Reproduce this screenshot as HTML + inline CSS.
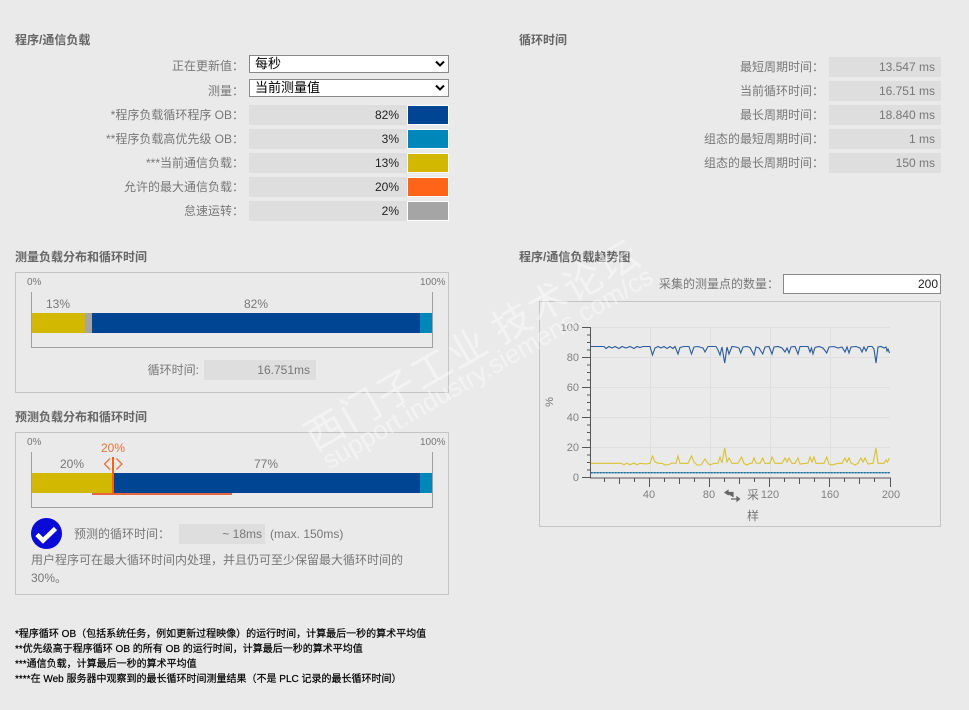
<!DOCTYPE html>
<html lang="zh"><head><meta charset="utf-8"><title>程序/通信负载</title>
<style>
html,body{margin:0;padding:0;background:#eaeaea}
body{width:969px;height:710px;position:relative;overflow:hidden;font-family:"Liberation Sans","Noto Sans CJK SC",sans-serif;font-size:12px;color:#777}
.a{position:absolute;white-space:nowrap}
.h{position:absolute;white-space:nowrap;font-weight:bold;font-size:12px;color:#666;line-height:16px}
.l{position:absolute;white-space:nowrap;text-align:right;line-height:20px;height:20px;color:#777}
.v{position:absolute;background:#dedede;text-align:right;line-height:20px;height:20px;box-sizing:border-box;padding-right:6px;color:#777}
.sel{position:absolute;left:249px;width:200px;height:18px;box-sizing:border-box;background:#fff;border:1px solid #888;color:#000;font-size:13px;line-height:16px;padding-left:5px}
.sw{position:absolute;left:407px;width:42px;height:20px;box-sizing:border-box;border:1px solid #fff}
.box{position:absolute;box-sizing:border-box;border:1px solid #c4c4c4}
.f{position:absolute;left:15px;white-space:nowrap;color:#000;font-size:10px;line-height:15px;-webkit-text-stroke:.2px #000}
.b{position:absolute}
</style></head><body>

<div class="h" style="left:15px;top:32px">程序/通信负载</div>
<div class="l" style="right:725px;top:56px">正在更新值：</div>
<div class="sel" style="top:55px">每秒</div>
<svg class="a" style="left:434px;top:60px" width="12" height="8"><path d="M2 1.5 L6 5.5 L10 1.5" fill="none" stroke="#000" stroke-width="2"/></svg>
<div class="l" style="right:725px;top:81px">测量：</div>
<div class="sel" style="top:79px">当前测量值</div>
<svg class="a" style="left:434px;top:84px" width="12" height="8"><path d="M2 1.5 L6 5.5 L10 1.5" fill="none" stroke="#000" stroke-width="2"/></svg>

<div class="l" style="right:725px;top:105px">*程序负载循环程序 OB：</div>
<div class="v" style="left:249px;top:105px;width:158px;color:#222;padding-right:8px">82%</div><div class="sw" style="top:105px;background:#004494"></div>
<div class="l" style="right:725px;top:129px">**程序负载高优先级 OB：</div>
<div class="v" style="left:249px;top:129px;width:158px;color:#222;padding-right:8px">3%</div><div class="sw" style="top:129px;background:#0087b9"></div>
<div class="l" style="right:725px;top:153px">***当前通信负载：</div>
<div class="v" style="left:249px;top:153px;width:158px;color:#222;padding-right:8px">13%</div><div class="sw" style="top:153px;background:#d2b900"></div>
<div class="l" style="right:725px;top:177px">允许的最大通信负载：</div>
<div class="v" style="left:249px;top:177px;width:158px;color:#222;padding-right:8px">20%</div><div class="sw" style="top:177px;background:#ff6419"></div>
<div class="l" style="right:725px;top:201px">怠速运转：</div>
<div class="v" style="left:249px;top:201px;width:158px;color:#222;padding-right:8px">2%</div><div class="sw" style="top:201px;background:#a5a5a5"></div>

<div class="h" style="left:519px;top:32px">循环时间</div>
<div class="l" style="right:145px;top:57px">最短周期时间：</div><div class="v" style="left:829px;top:57px;width:112px">13.547 ms</div>
<div class="l" style="right:145px;top:81px">当前循环时间：</div><div class="v" style="left:829px;top:81px;width:112px">16.751 ms</div>
<div class="l" style="right:145px;top:105px">最长周期时间：</div><div class="v" style="left:829px;top:105px;width:112px">18.840 ms</div>
<div class="l" style="right:145px;top:129px">组态的最短周期时间：</div><div class="v" style="left:829px;top:129px;width:112px">1 ms</div>
<div class="l" style="right:145px;top:153px">组态的最长周期时间：</div><div class="v" style="left:829px;top:153px;width:112px">150 ms</div>

<div class="h" style="left:15px;top:249px">测量负载分布和循环时间</div>
<div class="box" style="left:15px;top:272px;width:434px;height:121px"></div>
<div class="a" style="left:27px;top:277px;font-size:10px;line-height:12px">0%</div>
<div class="a" style="left:420px;top:277px;font-size:10px;line-height:12px">100%</div>
<div class="b" style="left:31px;top:292px;width:400px;height:55px;border:1px solid #a0a0a0;border-top:0"></div>
<div class="a" style="left:46px;top:296px;line-height:16px">13%</div>
<div class="a" style="left:244px;top:296px;line-height:16px">82%</div>
<div class="b" style="left:32px;top:313px;width:52.5px;height:20px;background:#d2b900"></div>
<div class="b" style="left:84.5px;top:313px;width:7.5px;height:20px;background:#a5a5a5"></div>
<div class="b" style="left:92px;top:313px;width:328px;height:20px;background:#004494"></div>
<div class="b" style="left:420px;top:313px;width:12px;height:20px;background:#0087b9"></div>
<div class="l" style="right:770px;top:360px">循环时间:</div>
<div class="v" style="left:204px;top:360px;width:112px">16.751ms</div>

<div class="h" style="left:15px;top:409px">预测负载分布和循环时间</div>
<div class="box" style="left:15px;top:432px;width:434px;height:163px"></div>
<div class="a" style="left:27px;top:437px;font-size:10px;line-height:12px">0%</div>
<div class="a" style="left:420px;top:437px;font-size:10px;line-height:12px">100%</div>
<div class="b" style="left:31px;top:452px;width:400px;height:55px;border:1px solid #a0a0a0;border-top:0"></div>
<div class="a" style="left:60px;top:456px;line-height:16px">20%</div>
<div class="a" style="left:254px;top:456px;line-height:16px">77%</div>
<div class="a" style="left:101px;top:440px;line-height:16px;color:#e8703a">20%</div>
<div class="b" style="left:32px;top:473px;width:81px;height:20px;background:#d2b900"></div>
<div class="b" style="left:113px;top:473px;width:307px;height:20px;background:#004494"></div>
<div class="b" style="left:420px;top:473px;width:12px;height:20px;background:#0087b9"></div>
<div class="b" style="left:92px;top:493px;width:140px;height:2px;background:#e8643c"></div>
<div class="b" style="left:112px;top:457px;width:2px;height:37px;background:#f0641e"></div>
<svg class="a" style="left:101px;top:456px" width="24" height="16"><path d="M9 2.5 L3.5 8 L9 13.5 M15.5 2.5 L21 8 L15.5 13.5" fill="none" stroke="#e8703a" stroke-width="1.3"/></svg>
<svg class="a" style="left:30px;top:518px" width="34" height="32"><circle cx="16.5" cy="15.5" r="15.5" fill="#0a0ad8"/><path d="M7 16.5 L13 22.5 L25.5 10.5" fill="none" stroke="#fff" stroke-width="4.6"/></svg>
<div class="l" style="left:74px;top:524px">预测的循环时间：</div>
<div class="v" style="left:179px;top:524px;width:86px;padding-right:3px">~ 18ms</div>
<div class="a" style="left:270px;top:524px;line-height:20px">(max. 150ms)</div>
<div class="a" style="left:31px;top:551px;line-height:18px;width:390px;white-space:normal">用户程序可在最大循环时间内处理，并且仍可至少保留最大循环时间的30%。</div>

<div class="h" style="left:519px;top:249px">程序/通信负载趋势图</div>
<div class="l" style="right:190px;top:274px">采集的测量点的数量：</div>
<div class="b" style="left:783px;top:274px;width:158px;height:20px;box-sizing:border-box;background:#fff;border:1px solid #888;color:#222;text-align:right;line-height:18px;padding-right:2px">200</div>
<div class="box" style="left:539px;top:301px;width:402px;height:226px"></div>

<svg class="a" style="left:0;top:0" width="969" height="710" font-family="Liberation Sans, Noto Sans CJK SC, sans-serif">
<g stroke="#dfdfdf" stroke-width="1" fill="none">
<path d="M591 327.5H890M591 357.5H890M591 387.5H890M591 417.5H890M591 447.5H890M650.5 327V477M710.5 327V477M770.5 327V477M830.5 327V477"/>
</g>
<g stroke="#555" stroke-width="1" fill="none">
<path d="M590.5 327V478H890.5V487"/>
<path d="M582 327.5H590M582 357.5H590M582 387.5H590M582 417.5H590M582 447.5H590M582 477.5H590"/>
<path d="M587 335H590M587 342.5H590M587 350H590M587 365H590M587 372.5H590M587 380H590M587 395H590M587 402.5H590M587 410H590M587 425H590M587 432.5H590M587 440H590M587 455H590M587 462.5H590M587 470H590"/>
<path d="M604.5 478V482M619.5 478V484M634.5 478V482M649.5 478V487M664.5 478V482M679.5 478V484M694.5 478V482M709.5 478V487M724.5 478V482M739.5 478V484M754.5 478V482M769.5 478V487M784.5 478V482M799.5 478V484M814.5 478V482M829.5 478V487M844.5 478V482M859.5 478V484M874.5 478V482"/>
</g>
<path d="M591 472.7H890" stroke="#0a8fb5" stroke-width="1" fill="none"/>
<path d="M591 472.7H890" stroke="#1c4a80" stroke-width="1" stroke-dasharray="1.5 1.5" fill="none"/>
<polyline fill="none" stroke="#2a5aa0" stroke-width="1.1" points="591,346.5 604,346.5 606,348.5 609,346.5 612,348 615,346.5 619,348.5 622,346.5 626,348 630,346.5 634,348.5 637,346.5 640,347.5 643,346.5 650,346.5 652.5,355 655,348 658,346.5 661,348 664,346.5 667,348.5 670,346.5 673,348.5 675,346.5 678,354 680,347.5 684,346.5 689,346.5 691.5,354 694,347 698,346.5 701,347.5 703,348 705,352 708,346.5 716,346.5 718,350 720,355 722,347 724.7,363 727,347 729,354 732,346.5 736,347 739,348 740.7,353 743,347 747,346.5 750,347.5 754,355 756,347 759,348 762.7,354 765,347 769,346.5 772,354 774,347 778,346.5 782,348 785,352 787,348 789,353 791,347 795,346.5 798,354 800,346.5 808,346.5 810,352 811.5,348 813,354 815,347.5 819,346.5 823,348 826.7,353 829,347 834,346.5 838,348 842,347 845,352 847,347 849,353 851,347 856,346.5 860,348 862,352 864,347 866,351 868,346.5 872,346.5 874,349 876,363 878,347 881,346.5 884,348 886,347 887,351 888,349 889.5,353"/>
<polyline fill="none" stroke="#d8c232" stroke-width="1.1" points="591,463.3 621,463.3 624,464.8 627,463.3 630,464.8 634,463 637,464.8 640,463.3 646,464 650,463.3 652.5,456 655,462 658,463.3 662,463.3 665,465 669,464.5 672,463 676,463.3 678,456 680,463.3 688,463.3 691.5,456 694,462 697,465 701,465 705,459 708,463.5 710,465 714,463.3 718,463.3 720,457 722,463 724.7,448 727,462 729,458 732,463.3 738,463.3 741.5,457 744,463.5 747,465 750,463.3 752,463.3 754,458 756,463 760,463.3 762.7,458 765,463.3 770,463.3 772,457 775,463.3 782,463.3 785,458 787,462 789,458 792,463.3 795,463.3 798,458 800,464 806,463.3 808,463 810,457 812,462 814,457 816,463.3 824,463.3 826.7,457 829,464 832,465 838,463.3 842,463.3 845,458 847,462 849,458 851,463 855,465 858,463.3 861,458 863,462 865,458 868,464 873,463.3 876,448 878,463.3 884,463.3 886,460 887.5,462 889.5,458"/>
<g font-size="11" fill="#808080" text-anchor="end">
<text x="579" y="331">100</text><text x="579" y="361">80</text><text x="579" y="391">60</text><text x="579" y="421">40</text><text x="579" y="451">20</text><text x="579" y="481">0</text>
</g>
<g font-size="11" fill="#808080" text-anchor="middle">
<text x="649" y="498">40</text><text x="709" y="498">80</text><text x="770" y="498">120</text><text x="830" y="498">160</text><text x="891" y="498">200</text>
</g>
<text x="0" y="0" font-size="11" fill="#777" text-anchor="middle" transform="translate(553 402) rotate(-90)">%</text>
<g stroke="#666" stroke-width="1.2" fill="#666">
<path d="M725 492.5H733V497M728 490.5L725 492.5L728 494.5Z"/>
<path d="M731 499H739.5M737 497L739.5 499L737 501Z"/>
</g>
<text x="747" y="499" font-size="12" fill="#777">采</text>
<text x="747" y="520" font-size="12" fill="#777">样</text>
</svg>

<div class="f" style="top:627px">*程序循环 OB（包括系统任务，例如更新过程映像）的运行时间，计算最后一秒的算术平均值</div>
<div class="f" style="top:642px">**优先级高于程序循环 OB 的所有 OB 的运行时间，计算最后一秒的算术平均值</div>
<div class="f" style="top:657px">***通信负载，计算最后一秒的算术平均值</div>
<div class="f" style="top:672px">****在 Web 服务器中观察到的最长循环时间测量结果（不是 PLC 记录的最长循环时间）</div>

<svg class="a" style="left:0;top:0;pointer-events:none" width="969" height="710">
<g fill="#fff" fill-opacity=".42" font-family="Noto Sans CJK SC, sans-serif">
<text transform="translate(315 452) rotate(-30)" font-size="39" letter-spacing="2">西门子工业 技术论坛</text>
<text transform="translate(329 470) rotate(-30)" font-size="26" font-family="Liberation Sans, sans-serif">support.industry.siemens.com/cs</text>
</g>
</svg>
</body></html>
